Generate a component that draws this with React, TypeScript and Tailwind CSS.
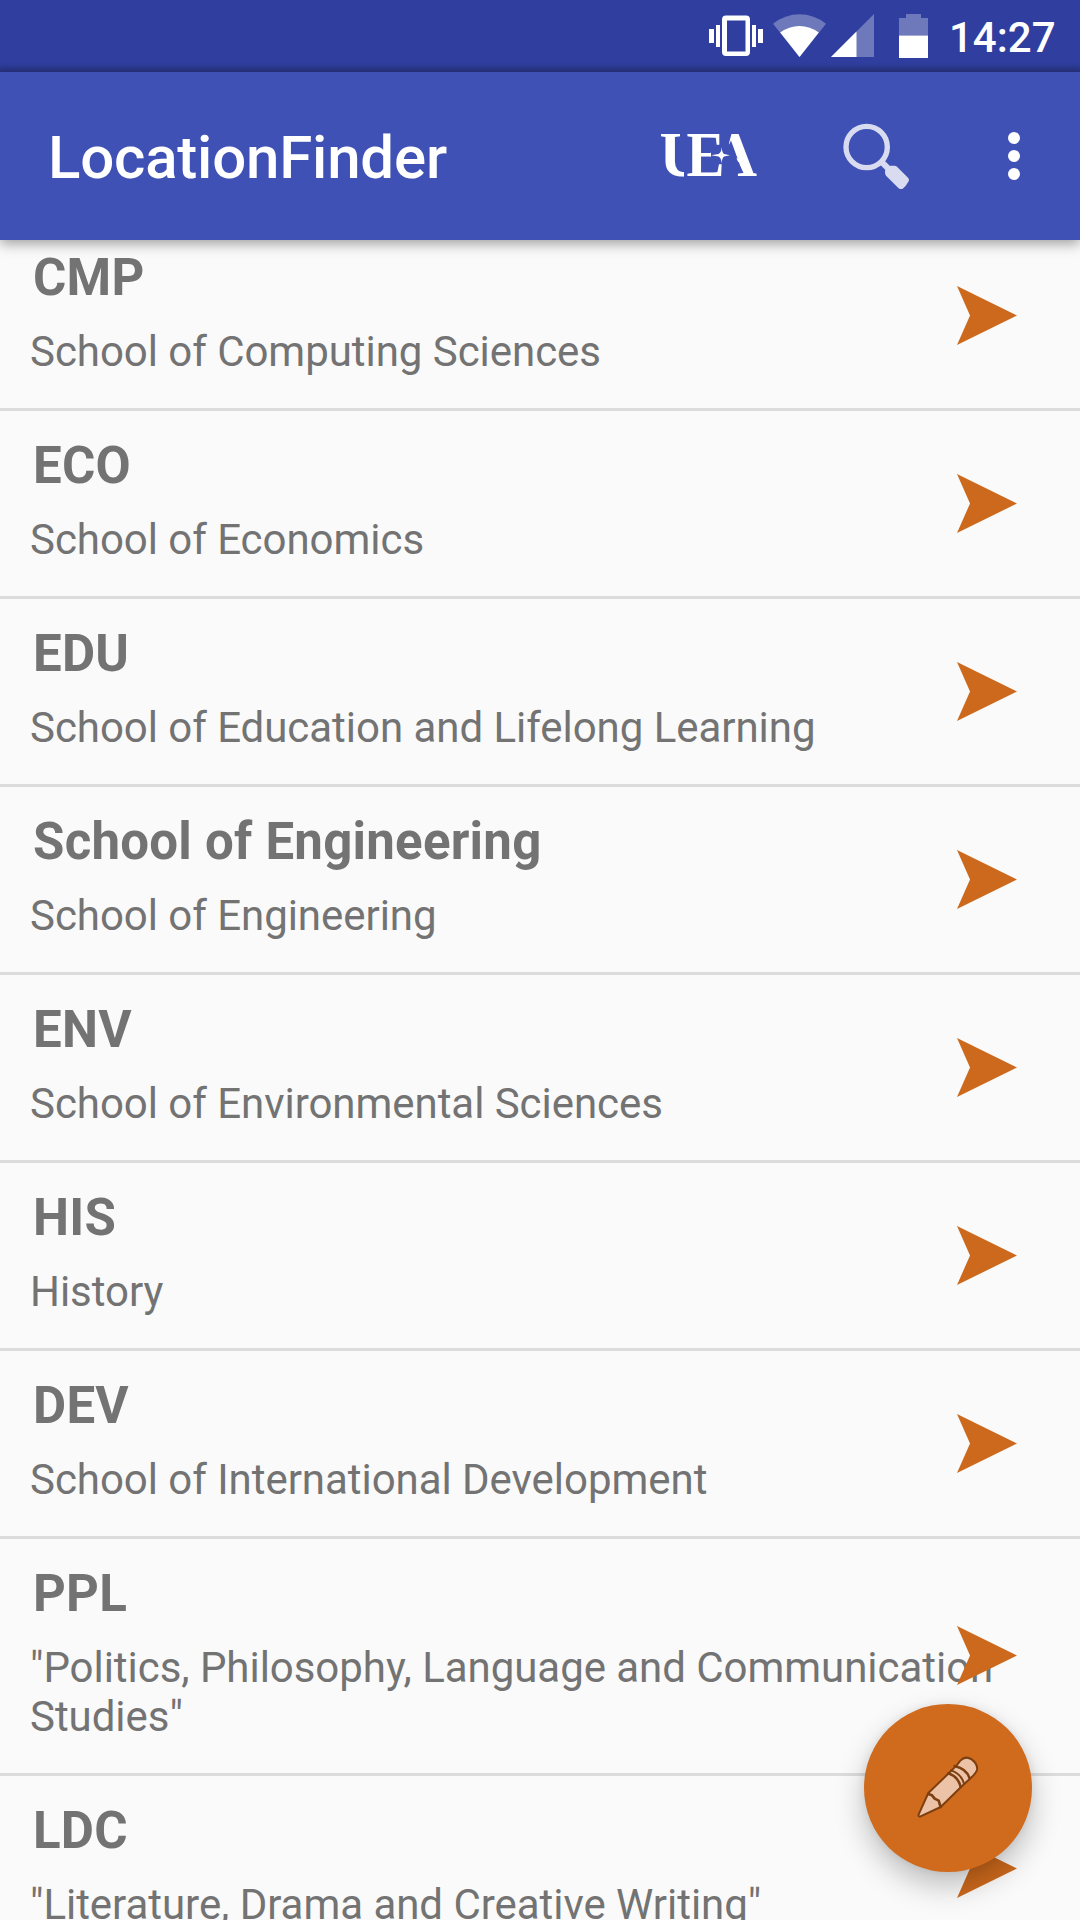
type School = { code: string; lines: string[] };

const schools: School[] = [
  { code: "CMP", lines: ["School of Computing Sciences"] },
  { code: "ECO", lines: ["School of Economics"] },
  { code: "EDU", lines: ["School of Education and Lifelong Learning"] },
  { code: "School of Engineering", lines: ["School of Engineering"] },
  { code: "ENV", lines: ["School of Environmental Sciences"] },
  { code: "HIS", lines: ["History"] },
  { code: "DEV", lines: ["School of International Development"] },
  { code: "PPL", lines: ['"Politics, Philosophy, Language and Communication', 'Studies"'] },
  { code: "LDC", lines: ['"Literature, Drama and Creative Writing"'] },
];

function StatusBar() {
  return (
    <div className="relative flex h-[72px] items-start bg-[#303f9f] pl-[709px] text-white">
      <svg className="mt-[15px] h-[42px] w-[54px] shrink-0" viewBox="0 0 54 42" fill="currentColor">
        <rect x="0" y="14" width="5" height="14" />
        <rect x="7" y="10" width="4" height="22" />
        <rect x="43" y="10" width="4" height="22" />
        <rect x="49" y="14" width="5" height="14" />
        <path fillRule="evenodd" d="M17 0.5H37Q41 0.5 41 4.500V37Q41 41 37 41H17Q13 41 13 37V4.500Q13 0.500 17 0.500ZM18 5.500V36.500H36.500V5.500Z" />
      </svg>
      <svg className="mt-[14px] ml-[10px] h-[43px] w-[53px] shrink-0" viewBox="0 0 53 43" fill="currentColor">
        <path opacity=".3" d="M0 9.800Q12 0.300 26.500 0.300T53 9.800L26.500 43Z" />
        <path d="M7.200 18.600Q16 12 26.500 12T45.800 18.600L26.500 43Z" />
      </svg>
      <svg className="mt-[14px] ml-[5px] h-[43px] w-[43px] shrink-0" viewBox="0 0 43 43" fill="currentColor">
        <path opacity=".3" d="M0 43L43 0V43Z" />
        <path d="M0 43L25.500 17.500V43Z" />
      </svg>
      <svg className="mt-[14px] ml-[25px] h-[44px] w-[29px] shrink-0" viewBox="0 0 29 44" fill="currentColor">
        <path opacity=".3" d="M7 0H22V4H29V21.500H0V4H7Z" />
        <path d="M0 21.500H29V44H0Z" />
      </svg>
      <span className="mt-[13px] ml-[21px] text-[42px] leading-[49px] font-medium">14:27</span>
      <div className="absolute inset-x-0 bottom-0 h-[9px] bg-linear-to-b from-transparent to-black/20" />
    </div>
  );
}

function UeaLogo() {
  return (
    <svg className="h-[46px] w-[98px]" viewBox="0 0 98 46" fill="#fff" fontFamily="Liberation Serif, serif" fontWeight="700" fontSize="63">
      <defs>
        <clipPath id="u-stem"><path d="M0 0H20V36L24 40V46H0Z" /></clipPath>
        <clipPath id="a-leg"><path d="M69 11L72 0H97V46H72V41H83.500Z" /></clipPath>
      </defs>
      <g clipPath="url(#u-stem)"><text x="-0.500" y="43.500" textLength="44" lengthAdjust="spacingAndGlyphs">U</text></g>
      <text x="26.500" y="44" textLength="38" lengthAdjust="spacingAndGlyphs">E</text>
      <g clipPath="url(#a-leg)"><text x="51" y="44" textLength="46" lengthAdjust="spacingAndGlyphs">A</text></g>
      <path d="M51 14H67V32H51Z" fill="#3f51b5" />
      <path d="M61.700 15Q62 20.500 64 22L70 23.300L64 24.500Q62 26 61.700 31.500Q61.400 26 58.500 24.500L51 23.300L58.500 22Q61.400 20.500 61.700 15Z" />
    </svg>
  );
}

function AppBar() {
  return (
    <header className="relative z-10 flex h-[168px] items-start bg-[#3f51b5] pl-12 text-white shadow-[0_4px_12px_rgba(0,0,0,0.36)]">
      <h1 className="mt-[51px] w-[612px] text-[60px] leading-[70px] font-medium tracking-[-0.2px]">LocationFinder</h1>
      <div className="mt-[60px]"><UeaLogo /></div>
      <svg className="mt-[51px] ml-[85px] h-[66px] w-[66px]" viewBox="69 68 198 198">
        <g fill="none" stroke="#d9dcf0">
          <circle cx="140" cy="140" r="62" strokeWidth="16" />
          <path d="M184 184L208 208" strokeWidth="18" />
        </g>
        <path d="M211 196H223Q228 196 231 199L264 232Q269 238 265 244Q259 256 248 265Q241 269 235 263L198 226Q195 222 195 216V212Q199 200 211 196Z" fill="#d9dcf0" />
      </svg>
      <div className="mt-[60px] ml-[99px] flex flex-col gap-1.5">
        <i className="size-3 rounded-full bg-white" />
        <i className="size-3 rounded-full bg-white" />
        <i className="size-3 rounded-full bg-white" />
      </div>
    </header>
  );
}

function SchoolRow({ school }: { school: School }) {
  return (
    <li className="relative flex shrink-0 flex-col border-b-3 border-[#dcdcdc] pt-[25px] pb-8 pl-[30px]">
      <h2 className="pl-[3px] text-[51px] leading-[60px] font-bold tracking-[0.24px]">{school.code}</h2>
      <p className="mt-[19px] text-[42px] leading-[49px] tracking-[-0.04px] whitespace-nowrap">
        {school.lines.map((line) => (
          <span key={line} className="block">{line}</span>
        ))}
      </p>
      <svg className="absolute top-0 bottom-px right-[63px] my-auto h-[59px] w-[60px]" viewBox="0 0 60 59">
        <path d="M0 0L60 29.500L0 59L13 29.500Z" fill="#cd691c" />
      </svg>
    </li>
  );
}

function EditButton() {
  return (
    <button className="absolute right-12 bottom-12 z-20 flex size-[168px] items-center justify-center rounded-full bg-[#d06b1d] shadow-[0_14px_30px_rgba(0,0,0,0.24),0_0_8px_rgba(0,0,0,0.08)]">
      <svg className="size-[110px]" viewBox="9 9 330 330" fill="#edc3a7" stroke="#7d3f10" strokeWidth="6" strokeLinejoin="round" strokeLinecap="round">
        <path d="M115 189L177 129L200 106L211 92Q226 76 245 88Q264 102 261 120Q258 130 243 143L210 174L152 231L90 260Q84 260 86 253Z" />
        <g fill="none">
          <path d="M115 192L126 196L134 206L146 212L152 231" strokeWidth="8" />
          <path d="M175 130Q205 140 212 171" strokeWidth="8" />
          <path d="M183 121Q215 132 222 162" strokeWidth="6" />
          <path d="M194 108Q230 116 239 145" strokeWidth="8" />
        </g>
      </svg>
    </button>
  );
}

export default function App() {
  return (
    <div className="relative flex h-[1920px] w-[1080px] flex-col overflow-hidden bg-[#fafafa] font-[Roboto,sans-serif]">
      <StatusBar />
      <AppBar />
      <main className="min-h-0 flex-1 overflow-hidden text-[#737373]">
        <ul className="-mt-[17px] flex flex-col">
          {schools.map((school) => (
            <SchoolRow key={school.code} school={school} />
          ))}
        </ul>
      </main>
      <EditButton />
    </div>
  );
}
